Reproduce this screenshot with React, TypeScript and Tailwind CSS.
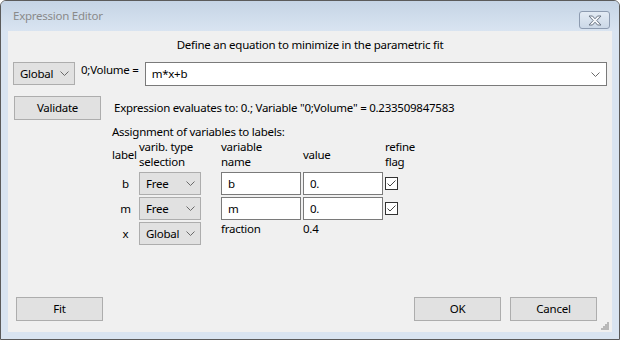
import React from 'react'

const FONT = { fontFamily: '"Noto Sans", "Open Sans", sans-serif' }

function Chevron({ className = '' }: { className?: string }) {
  return (
    <svg width="9" height="5" viewBox="0 0 9 5" className={className}>
      <path d="M0.5 0.5 L4.5 4.5 L8.5 0.5" fill="none" stroke="#6a6a6a" strokeWidth="1" />
    </svg>
  )
}

function Combo({ label, width }: { label: string; width: string }) {
  return (
    <div
      className={`flex h-[23px] items-center justify-between border border-[#adadad] bg-[#e1e1e1] pl-[6px] pr-[5px] ${width}`}
    >
      <span>{label}</span>
      <Chevron />
    </div>
  )
}

function Button({ label, className = '' }: { label: string; className?: string }) {
  return (
    <div
      className={`flex h-[24px] w-[87px] items-center justify-center border border-[#adadad] bg-[#e1e1e1] ${className}`}
    >
      {label}
    </div>
  )
}

function TextBox({ value }: { value: string }) {
  return (
    <div className="flex h-[23px] w-[80px] items-center border border-[#7a7a7a] bg-white pl-[6px]">
      {value}
    </div>
  )
}

function Check() {
  return (
    <div className="flex h-[13px] w-[13px] items-center justify-center border border-[#333] bg-white">
      <svg width="11" height="11" viewBox="0 0 11 11">
        <path d="M1.5 5.5 L4 8 L9.5 2.5" fill="none" stroke="#444" strokeWidth="1" />
      </svg>
    </div>
  )
}

const ROWS = [
  { label: 'b', type: 'Free', name: 'b', value: '0.', editable: true },
  { label: 'm', type: 'Free', name: 'm', value: '0.', editable: true },
  { label: 'x', type: 'Global', name: 'fraction', value: '0.4', editable: false },
]

export default function App() {
  return (
    <div
      className="relative h-[340px] w-[620px] overflow-hidden rounded-t-[6px] border border-[#5b5b5b] bg-[#d9e4f1] text-[11.5px] tracking-[-0.25px] text-black"
      style={FONT}
    >
      {/* ── Title bar ── */}
      <div className="flex h-[30px] items-center justify-between bg-gradient-to-b from-[#c5d4e5] to-[#d9e4f1] pl-[12px] pr-[9px]">
        <span className="text-[11.5px] text-[#8a8a8a]">Expression Editor</span>
        <div className="mt-[8px] flex h-[18px] w-[31px] items-center justify-center rounded-[3px] border border-[#8d9bb0] bg-gradient-to-b from-[#e3ebf4] to-[#cbd8e7]">
          <svg width="14" height="11" viewBox="0 0 14 11">
            <path
              d="M1 1 L4.5 1 L7 3.8 L9.5 1 L13 1 L8.8 5.5 L13 10 L9.5 10 L7 7.2 L4.5 10 L1 10 L5.2 5.5 Z"
              fill="#f5f7fa"
              stroke="#6d7786"
              strokeWidth="1"
              strokeLinejoin="round"
            />
          </svg>
        </div>
      </div>

      {/* ── Client area ── */}
      <div className="relative mx-[7px] flex h-[301px] flex-col bg-[#f0f0f0] px-[5px]">
        <div className="mt-[6px] text-center leading-[16px]">
          Define an equation to minimize in the parametric fit
        </div>

        {/* expression row */}
        <div className="mt-[9px] flex items-start">
          <Combo label="Global" width="w-[62px]" />
          <span className="ml-[6px] mt-[-1px]">0;Volume =</span>
          <div className="ml-[6px] flex h-[24px] flex-1 items-center justify-between border border-[#7a7a7a] bg-white pl-[6px] pr-[6px]">
            <span>m*x+b</span>
            <Chevron />
          </div>
        </div>

        {/* validate row */}
        <div className="mt-[10px] flex items-center">
          <Button label="Validate" className="ml-[1px] w-[86px]" />
          <span className="ml-[13px]">
            Expression evaluates to: 0.; Variable "0;Volume" = 0.233509847583
          </span>
        </div>

        {/* assignment table */}
        <div className="ml-[99px] mt-[4px] flex flex-col">
          <div className="leading-[16px]">Assignment of variables to labels:</div>
          <div className="mt-[-1px] grid grid-cols-[27px_82px_82px_82px_40px] leading-[15px]">
            <div className="self-center">label</div>
            <div>
              varib. type
              <br />
              selection
            </div>
            <div>
              variable
              <br />
              name
            </div>
            <div className="self-center">value</div>
            <div>
              refine
              <br />
              flag
            </div>
          </div>
          <div className="mt-[3px] flex flex-col gap-[2px]">
            {ROWS.map((r) => (
              <div key={r.label} className="grid h-[23px] grid-cols-[27px_82px_82px_82px_40px] items-center">
                <div className="text-center">{r.label}</div>
                <Combo label={r.type} width="w-[62px]" />
                {r.editable ? <TextBox value={r.name} /> : <div className="mt-[-9px]">{r.name}</div>}
                {r.editable ? <TextBox value={r.value} /> : <div className="mt-[-9px]">{r.value}</div>}
                {r.editable ? <Check /> : <div />}
              </div>
            ))}
          </div>
        </div>

        {/* bottom buttons */}
        <div className="mt-auto mb-[11px] flex items-center">
          <Button label="Fit" className="ml-[3px]" />
          <div className="flex-1" />
          <Button label="OK" />
          <Button label="Cancel" className="ml-[9px] mr-[10px]" />
        </div>

        {/* resize grip */}
        <svg width="8" height="8" viewBox="0 0 8 8" className="absolute bottom-[2px] right-[3px]">
          {[
            [6, 0],
            [4, 2],
            [6, 2],
            [2, 4],
            [4, 4],
            [6, 4],
            [0, 6],
            [2, 6],
            [4, 6],
            [6, 6],
          ].map(([x, y]) => (
            <rect key={`${x}-${y}`} x={x} y={y} width="2" height="2" fill="#b8b8b8" />
          ))}
        </svg>
      </div>
    </div>
  )
}
